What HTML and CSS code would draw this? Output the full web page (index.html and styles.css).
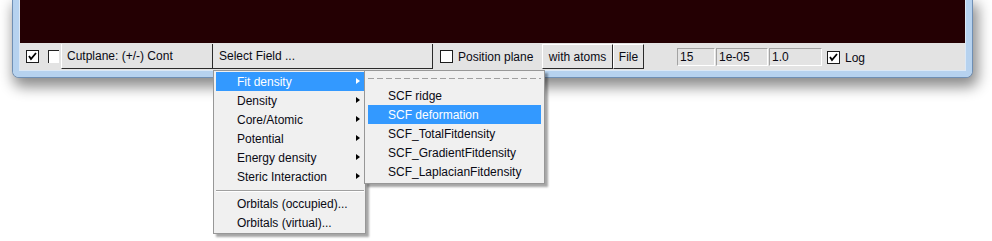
FILE: index.html
```html
<!DOCTYPE html>
<html>
<head>
<meta charset="utf-8">
<link rel="stylesheet" href="styles.css">
</head>
<body>
<div class="window">
  <div class="canvas"></div>
  <div class="toolbar">
    <span class="cb cb1"><svg width="11" height="11" viewBox="0 0 11 11"><polyline points="2,5 4,8 9,2" fill="none" stroke="#000" stroke-width="1.8"/></svg></span>
    <span class="cb2"></span>
    <div class="label">Cutplane: (+/-) Cont</div>
    <div class="select">Select Field ...</div>
    <span class="cb cb3"></span>
    <span class="pos">Position plane</span>
    <div class="btn atoms">with atoms</div>
    <div class="btn file">File</div>
    <div class="inputs">
      <div class="inp w1">15</div>
      <div class="inp w2">1e-05</div>
      <div class="inp w3">1.0</div>
    </div>
    <span class="cb cb4"><svg width="11" height="11" viewBox="0 0 11 11"><polyline points="2,5 4,8 9,2" fill="none" stroke="#000" stroke-width="1.8"/></svg></span>
    <span class="log">Log</span>
  </div>
</div>

<div class="menu menu1">
  <div class="item active">Fit density<span class="arrow"></span></div>
  <div class="item">Density<span class="arrow"></span></div>
  <div class="item">Core/Atomic<span class="arrow"></span></div>
  <div class="item">Potential<span class="arrow"></span></div>
  <div class="item">Energy density<span class="arrow"></span></div>
  <div class="item">Steric Interaction<span class="arrow"></span></div>
  <div class="sep"></div>
  <div class="item">Orbitals (occupied)...</div>
  <div class="item">Orbitals (virtual)...</div>
</div>

<div class="menu menu2">
  <div class="tear"></div>
  <div class="item">SCF ridge</div>
  <div class="item active">SCF deformation</div>
  <div class="item">SCF_TotalFitdensity</div>
  <div class="item">SCF_GradientFitdensity</div>
  <div class="item">SCF_LaplacianFitdensity</div>
</div>
</body>
</html>
```

FILE: styles.css
```css
html, body {
  margin: 0;
  padding: 0;
  background: #ffffff;
  overflow: hidden;
  width: 992px;
  height: 241px;
}
body {
  font-family: "Liberation Sans", Arial, sans-serif;
  font-size: 12px;
  color: #0a0a14;
  position: relative;
}
.window {
  margin-left: 13px;
  width: 947px;
  border: 6px solid #b6d2ef;
  border-top: 0;
  border-radius: 0 0 6px 6px;
  box-shadow: 0 0 0 1px #6f8fb4, 3px 7px 14px 3px rgba(0,0,0,0.45);
}
.canvas {
  height: 43px;
  background: #240003;
  border-left: 1px solid #dbe8f6;
  border-right: 1px solid #dbe8f6;
}
.toolbar {
  height: 27px;
  background: #e3e3e3;
  display: flex;
  align-items: center;
  border-left: 1px solid #dbe8f6;
  border-right: 1px solid #dbe8f6;
  border-bottom: 1px solid #dbe8f6;
}
.cb {
  width: 11px;
  height: 11px;
  border: 1px solid #1c1c1c;
  background: #fff;
  display: flex;
  align-items: center;
  justify-content: center;
  flex: none;
}
.cb1 { margin-left: 6px; }
.cb2 {
  width: 10px;
  height: 12px;
  margin-left: 9px;
  border-left: 1px solid #222;
  border-top: 1px solid #222;
  background: #fff;
  flex: none;
}
.label {
  margin-left: 2px;
  width: 151px;
  height: 25px;
  align-self: flex-start;
  margin-top: 1px;
  border-left: 1px solid #fff;
  border-bottom: 1px solid #2a2a2a;
  display: flex;
  align-items: center;
  padding-left: 5px;
  box-sizing: border-box;
  flex: none;
}
.select {
  width: 221px;
  height: 25px;
  align-self: flex-start;
  margin-top: 1px;
  border-left: 1px solid #2a2a2a;
  border-right: 1px solid #2a2a2a;
  border-bottom: 1px solid #2a2a2a;
  box-sizing: border-box;
  padding-left: 6px;
  display: flex;
  align-items: center;
  background: #e6e6e6;
  flex: none;
}
.cb3 { margin-left: 7px; }
.pos {
  margin-left: 5px;
  width: 84px;
  flex: none;
}
.btn {
  height: 25px;
  align-self: flex-start;
  margin-top: 1px;
  box-sizing: border-box;
  border-left: 1px solid #fff;
  border-top: 1px solid #fff;
  border-right: 1px solid #2a2a2a;
  border-bottom: 1px solid #2a2a2a;
  display: flex;
  align-items: center;
  justify-content: center;
  flex: none;
}
.atoms { width: 71px; }
.file { width: 31px; }
.inputs {
  display: flex;
  gap: 1px;
  margin-left: 33px;
}
.inp {
  height: 18px;
  box-sizing: border-box;
  border-left: 1px solid #a3a3a3;
  border-top: 1px solid #a3a3a3;
  border-right: 1px solid #fff;
  border-bottom: 1px solid #fff;
  padding-left: 2px;
  display: flex;
  align-items: center;
}
.w1 { width: 38px; }
.w2 { width: 52px; }
.w3 { width: 53px; }
.cb4 { margin-left: 5px; margin-top: 2px; }
.log { margin-left: 5px; margin-top: 2px; }

.menu {
  position: absolute;
  background: #f0f0f0;
  border: 1px solid #979797;
  box-shadow: 3px 3px 2px rgba(0,0,0,0.35);
  box-sizing: border-box;
}
.menu1 {
  left: 213px;
  top: 70px;
  width: 153px;
  padding: 1px 1px 1px 2px;
}
.menu2 {
  left: 364px;
  top: 70px;
  width: 181px;
  padding: 0 3px 2px 3px;
}
.item {
  height: 19px;
  display: flex;
  align-items: center;
  position: relative;
  white-space: nowrap;
}
.menu1 .item { padding-left: 21px; }
.menu2 .item { padding-left: 20px; }
.item.active {
  background: #3399ff;
  color: #fff;
}
.arrow {
  position: absolute;
  right: 4px;
  top: 6px;
  width: 0;
  height: 0;
  border-top: 3.5px solid transparent;
  border-bottom: 3.5px solid transparent;
  border-left: 4px solid #000;
}
.item.active .arrow { border-left-color: #fff; }
.sep {
  height: 8px;
  display: flex;
  align-items: center;
}
.sep::before {
  content: "";
  display: block;
  width: 100%;
  height: 1px;
  background: #a0a0a0;
  box-shadow: 0 1px 0 #fff;
}
.tear {
  height: 15px;
  display: flex;
  align-items: center;
}
.tear::before {
  content: "";
  display: block;
  width: 100%;
  height: 1px;
  margin-top: -1px;
  background: repeating-linear-gradient(90deg, #a0a0a0 0 6px, transparent 6px 9px);
}
```
